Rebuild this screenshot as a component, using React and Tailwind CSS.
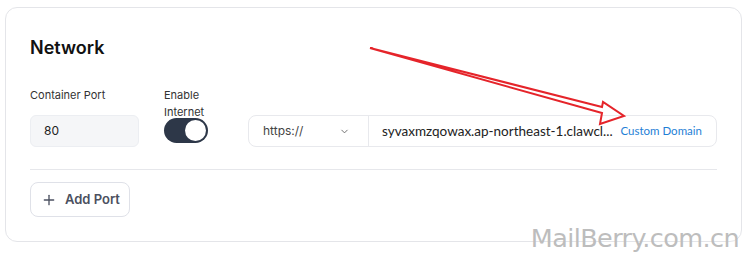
import { ChevronDown, Plus } from 'lucide-react';

const Arrow = () => (
    <svg className="pointer-events-none absolute left-0 top-0" width="744" height="257" viewBox="0 0 744 257" fill="none">
        <path
            d="M370 48 L602 107 L603 102 L624 116 L600 124 L602 113 Z"
            stroke="#e5242a"
            strokeWidth="2"
            strokeLinejoin="miter"
        />
    </svg>
);

const App = () => {
    return (
        <div className="relative h-[257px] w-[744px] bg-white pl-[5px] pr-[2px] pt-[7px] font-['Inter','Noto_Sans',sans-serif]">
            <div className="h-[235px] rounded-xl border border-[#e4e5e9] bg-white px-[24px] pt-[29px]">
                <h2 className="text-[18px] font-semibold leading-[22px] text-[#111]">Network</h2>

                <div className="mt-[25px] flex items-end">
                    <div className="w-[109px]">
                        <label className="block text-[11px] leading-[14px] text-[#333]">Container Port</label>
                        <div className="mt-[13px] flex h-[32px] items-center rounded-md border border-[#eceef2] bg-[#f5f6f8] px-[13px] text-[12px] text-[#222]">
                            80
                        </div>
                    </div>

                    <div className="ml-[25px] flex flex-col">
                        <label className="block pt-[3px] text-[11px] leading-[17px] text-[#333]">
                            Enable
                            <br />
                            Internet
                        </label>
                        <button className="mb-[4px] -mt-[3px] flex h-[25px] w-[44px] items-center justify-end rounded-full bg-[#2d3748] pr-[2px]">
                            <span className="h-[21px] w-[21px] rounded-full bg-white" />
                        </button>
                    </div>

                    <div className="ml-[40px] flex h-[32px] flex-1 overflow-hidden rounded-lg border border-[#e8e9ed] bg-white">
                        <div className="flex w-[120px] items-center justify-between border-r border-[#e8e9ed] px-[14px] text-[12px] text-[#444]">
                            https://
                            <ChevronDown size={11} strokeWidth={2} className="mr-[4px] text-[#666]" />
                        </div>
                        <div className="flex min-w-0 flex-1 items-center justify-between pl-[13px] pr-[14px]">
                            <span className="whitespace-nowrap font-['Lato',sans-serif] text-[13.5px] text-[#222]">syvaxmzqowax.ap-northeast-1.clawcl...</span>
                            <span className="ml-[4px] shrink-0 font-['Lato',sans-serif] text-[11.5px] text-[#1f7fd6]">Custom Domain</span>
                        </div>
                    </div>
                </div>

                <div className="mt-[22px] border-t border-[#e6e7eb]" />

                <button className="mt-[12px] flex h-[35px] items-center gap-[8px] rounded-lg border border-[#dfe1e8] pl-[10px] pr-[9px] text-[13px] font-semibold text-[#4b5060]">
                    <Plus size={16} strokeWidth={2} />
                    Add Port
                </button>
            </div>

            <Arrow />

            <span className="pointer-events-none absolute right-[5px] top-[226px] font-['DejaVu_Sans',sans-serif] text-[25.5px] leading-none tracking-[-0.6px] text-[#bdbdbd]">
                MailBerry.com.cn
            </span>
        </div>
    );
};

export default App;
